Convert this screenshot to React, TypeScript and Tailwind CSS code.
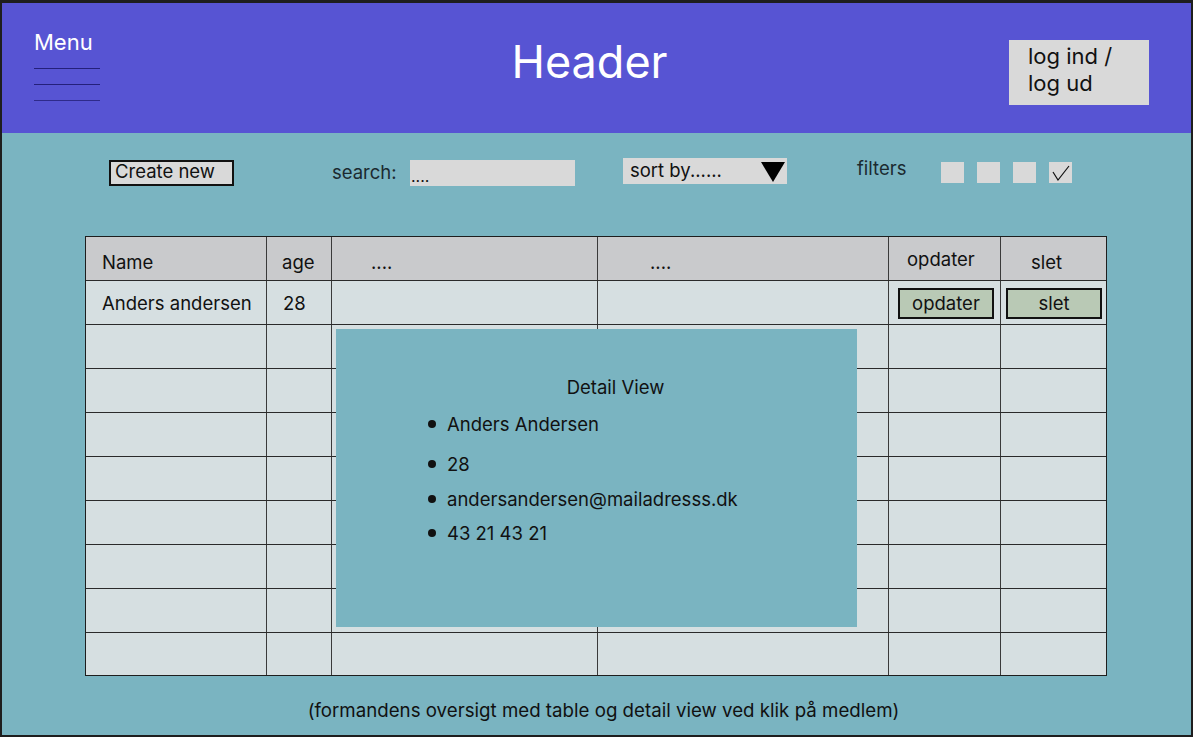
import React from "react";

const cols = [181, 65, 266, 291, 112, 105];

function Row({ children, head, last }: { children?: React.ReactNode; head?: boolean; last?: boolean }) {
  return (
    <div
      className={`flex ${last ? "h-[42px]" : "h-[44px] border-b border-[#2a2a2a]"} ${head ? "bg-[#c9cacc]" : "bg-[#d6dfe1]"}`}
    >
      {children}
    </div>
  );
}

function Cell({ w, children, className = "", last }: { w: number; children?: React.ReactNode; className?: string; last?: boolean }) {
  return (
    <div
      className={`h-full shrink-0 flex items-center ${last ? "" : "border-r border-[#3a3a3a]"} ${className}`}
      style={{ width: w }}
    >
      {children}
    </div>
  );
}

export default function App() {
  return (
    <div
      className="w-[1193px] h-[737px] bg-[#1e1e1e] pt-[3px] pl-[2px] pr-[2px] pb-[2px] text-[#111]"
      style={{ fontFamily: "Inter, 'Noto Sans', sans-serif" }}
    >
      <div className="w-full h-full flex flex-col">
        {/* Header */}
        <div className="h-[130px] bg-[#5754d3] flex items-start shrink-0">
          <div className="w-[200px] pl-[32px] pt-[25px]">
            <div className="text-white text-[22px] leading-[28px]">Menu</div>
            <div className="mt-[12px] w-[66px] flex flex-col gap-[15px]">
              <div className="h-px bg-[#24207a]" />
              <div className="h-px bg-[#24207a]" />
              <div className="h-px bg-[#2e2a8a]" />
            </div>
          </div>
          <div className="flex-1 flex justify-center pt-[31px] pr-[14px]">
            <div className="text-white text-[45px] leading-[56px]">Header</div>
          </div>
          <div className="w-[200px] pt-[37px] flex justify-end pr-[42px]">
            <div className="w-[140px] h-[65px] bg-[#d9d9d9] pl-[19px] pt-[3px] text-[22px] leading-[27px] text-[#111]">
              log ind /<br />log ud
            </div>
          </div>
        </div>

        {/* Main */}
        <div className="flex-1 bg-[#7ab4c1] flex flex-col text-[18.5px]">
          {/* Toolbar */}
          <div className="flex items-start h-[103px] pt-[25px]">
            <div className="ml-[107px] mt-[2px] w-[125px] h-[26px] shrink-0 bg-[#d9d9d9] border-2 border-[#111] flex items-center pl-[4px] pb-[3px] leading-none whitespace-nowrap">
              Create new
            </div>
            <div className="ml-[98px] mt-[2px] w-[78px] shrink-0 leading-[24px] text-[#1b2a30]">search:</div>
            <div className="mt-[2px] w-[165px] h-[26px] shrink-0 bg-[#d9d9d9] flex items-end pl-[1px] text-[16px] leading-[20px]">
              ....
            </div>
            <div className="ml-[48px] w-[164px] h-[26px] shrink-0 bg-[#d9d9d9] flex items-center justify-between pl-[7px] pr-[2px]">
              <span className="leading-none pb-[2px]">sort by......</span>
              <svg width="24" height="22" viewBox="0 0 24 22">
                <polygon points="0,2 24,2 12,22" fill="#000" />
              </svg>
            </div>
            <div className="ml-[70px] -mt-[2px] w-[84px] shrink-0 leading-[24px] text-[#1b2a30]">filters</div>
            <div className="mt-[4px] flex gap-[13px]">
              <div className="w-[23px] h-[21px] bg-[#d9d9d9]" />
              <div className="w-[23px] h-[21px] bg-[#d9d9d9]" />
              <div className="w-[23px] h-[21px] bg-[#d9d9d9]" />
              <div className="w-[23px] h-[21px] bg-[#d9d9d9] flex items-center justify-center">
                <svg width="18" height="16" viewBox="0 0 18 16">
                  <polyline points="1,7 6,15 17,1" fill="none" stroke="#111" strokeWidth="1.2" />
                </svg>
              </div>
            </div>
          </div>

          {/* Table */}
          <div className="ml-[83px] relative w-[1022px] border border-[#1e1e1e]">
            <div className="flex flex-col">
              <Row head>
                <Cell w={cols[0]} className="pl-[16px] pt-[8px]">Name</Cell>
                <Cell w={cols[1]} className="pl-[15px] pt-[8px]">age</Cell>
                <Cell w={cols[2]} className="pl-[39px] pt-[8px]">....</Cell>
                <Cell w={cols[3]} className="pl-[52px] pt-[8px]">....</Cell>
                <Cell w={cols[4]} className="pl-[18px] pt-[2px]">opdater</Cell>
                <Cell w={cols[5]} last className="pl-[30px] pt-[8px]">slet</Cell>
              </Row>
              <Row>
                <Cell w={cols[0]} className="pl-[16px] pt-[2px]">Anders andersen</Cell>
                <Cell w={cols[1]} className="pl-[16px] pt-[2px]">28</Cell>
                <Cell w={cols[2]} />
                <Cell w={cols[3]} />
                <Cell w={cols[4]} className="pl-[9px] pt-[2px]">
                  <div className="w-[96px] h-[31px] bg-[#b9c9b5] border-2 border-[#111] flex items-center justify-center">opdater</div>
                </Cell>
                <Cell w={cols[5]} last className="pl-[5px] pt-[2px]">
                  <div className="w-[96px] h-[31px] bg-[#b9c9b5] border-2 border-[#111] flex items-center justify-center">slet</div>
                </Cell>
              </Row>
              {Array.from({ length: 8 }).map((_, i) => (
                <Row key={i} last={i === 7}>
                  <Cell w={cols[0]} />
                  <Cell w={cols[1]} />
                  <Cell w={cols[2]} />
                  <Cell w={cols[3]} />
                  <Cell w={cols[4]} />
                  <Cell w={cols[5]} last />
                </Row>
              ))}
            </div>

            {/* Detail view overlay */}
            <div className="absolute left-[250px] top-[92px] w-[521px] h-[298px] bg-[#7ab4c1]">
              <div className="text-center pt-[46px] pl-[38px] leading-[24px]">Detail View</div>
              <ul className="mt-[13px] pl-[92px] flex flex-col">
                {[
                  ["Anders Andersen", "h-[24px]"],
                  ["28", "h-[40px] pt-[16px]"],
                  ["andersandersen@mailadresss.dk", "h-[35px] pt-[11px]"],
                  ["43 21 43 21", "h-[34px] pt-[10px]"],
                ].map(([t, c]) => (
                  <li key={t} className={`flex items-center gap-[11px] leading-[24px] ${c}`}>
                    <span className="w-[8px] h-[8px] rounded-full bg-[#111] inline-block shrink-0" />
                    <span>{t}</span>
                  </li>
                ))}
              </ul>
            </div>
          </div>

          <div className="mt-[23px] text-center text-[18.7px] leading-[24px] pl-[14px]">
            (formandens oversigt med table og detail view ved klik på medlem)
          </div>
        </div>
      </div>
    </div>
  );
}
